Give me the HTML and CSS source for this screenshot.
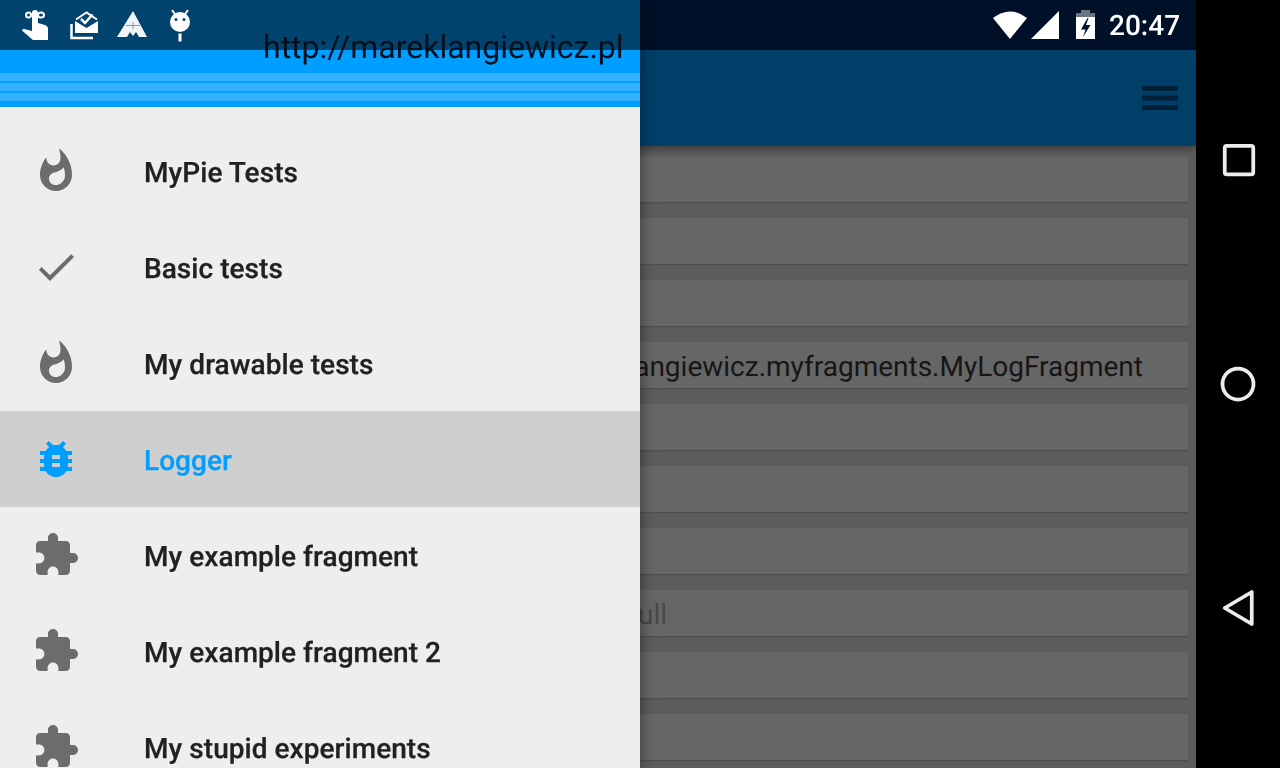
FILE: index.html
```html
<!DOCTYPE html>
<html lang="en">
<head>
<meta charset="utf-8">
<title>MyPie</title>
<link rel="stylesheet" href="styles.css">
</head>
<body>
<div class="screen">
  <div class="app">
    <div class="statusbar">
      <svg class="sys-icons" width="102" height="32" viewBox="0 0 102 32">
        <path class="white" d="M0 8 Q17 -5 34 8 L17 29 Z"/>
        <path class="white" d="M38 29 L66 1 V29 Z"/>
        <path class="batt-top" d="M88 0 h9 v3 h5 v4 H83 V3 h5z"/>
        <path class="white" d="M83 7 h19 v22 H83z"/>
        <path class="bolt" d="M94.500 8 L88 19.500 h4.500 L90 27 L97.500 15 h-4.500 L95.500 8z"/>
      </svg>
      <span class="clock">20:47</span>
    </div>
    <div class="appbar">
      <svg class="menu" width="36" height="24" viewBox="0 0 36 24">
        <rect y="0" width="36" height="5"/>
        <rect y="9.500" width="36" height="5"/>
        <rect y="19" width="36" height="5"/>
      </svg>
    </div>
    <div class="content">
      <div class="card"></div>
      <div class="card"></div>
      <div class="card"></div>
      <div class="card card-log">pl.mareklangiewicz.myfragments.MyLogFragment</div>
      <div class="card"></div>
      <div class="card"></div>
      <div class="card"></div>
      <div class="card card-null">null</div>
      <div class="card"></div>
      <div class="card"></div>
    </div>
  </div>

  <nav class="navbar">
    <div class="nav-btn">
      <svg width="48" height="48" viewBox="0 0 48 48"><rect x="10.750" y="9.750" width="28.500" height="28.500" rx="2"/></svg>
    </div>
    <div class="nav-btn">
      <svg width="48" height="48" viewBox="0 0 48 48"><circle cx="24" cy="24" r="15.500"/></svg>
    </div>
    <div class="nav-btn">
      <svg width="48" height="48" viewBox="0 0 48 48"><path d="M10.750 24 L37.750 8 V40 Z"/></svg>
    </div>
  </nav>

  <aside class="drawer">
    <div class="drawer-status">
      <svg width="32" height="32" viewBox="0 0 32 32">
        <path class="white" d="M12 3 a3 3 0 0 1 6 0 V13 l7 2 q3 1 3 4 V30 H13 L2.500 21 q-1-2 1.500-2 L12 21z"/>
        <ellipse class="ring thin" cx="8.500" cy="5" rx="2.500" ry="2.500"/>
        <ellipse class="ring thin" cx="21" cy="5" rx="3" ry="2.500"/>
      </svg>
      <svg width="32" height="32" viewBox="0 0 32 32">
        <path class="ring" d="M3.500 14 V28 H25"/>
        <path class="white" d="M7 11 L18.500 18 L30 11 V23 H7 Z"/>
        <path class="ring thin" d="M8 9.500 L18.500 2.500 L29 9.500"/>
        <path class="ring" d="M13 9 L17 13 L24.500 4.500"/>
      </svg>
      <svg width="32" height="32" viewBox="0 0 32 32">
        <path class="white soft" d="M17 1 L31 27 H23 L20 22 L17 26 L14 22 L11 27 H1 Z"/>
        <path class="cross" d="M17 12 V19 M10 15.500 H24"/>
      </svg>
      <svg width="32" height="32" viewBox="0 0 32 32">
        <path class="ring thin" d="M8 0 L11.500 5 M24 0 L20.500 5"/>
        <circle class="white" cx="16" cy="12" r="10"/>
        <circle class="eye" cx="12" cy="9.500" r="1.500"/>
        <circle class="eye" cx="20" cy="9.500" r="1.500"/>
        <rect class="white" x="14.500" y="23.500" width="3" height="8"/>
      </svg>
    </div>
    <header class="drawer-header">
      <span class="url">http://mareklangiewicz.pl</span>
      <div class="stripe"></div>
      <div class="stripe"></div>
      <div class="stripe"></div>
    </header>
    <ul class="menu-list">
      <li class="item">
        <svg class="item-icon" viewBox="0 0 24 24"><path d="M13.500.67s.74 2.650.74 4.800c0 2.060-1.350 3.730-3.410 3.730-2.070 0-3.630-1.670-3.630-3.730l.03-.36C5.210 7.510 4 10.620 4 14c0 4.420 3.580 8 8 8s8-3.580 8-8C20 8.610 17.410 3.800 13.500.67zM11.710 19c-1.780 0-3.220-1.400-3.220-3.140 0-1.620 1.050-2.760 2.810-3.120 1.770-.36 3.600-1.210 4.620-2.580.39 1.290.59 2.650.59 4.040 0 2.650-2.150 4.800-4.800 4.800z"/></svg>
        <span class="item-label">MyPie Tests</span>
      </li>
      <li class="item">
        <svg class="item-icon" viewBox="0 0 24 24"><path d="M9 16.170L4.830 12l-1.420 1.410L9 19 21 7l-1.410-1.410z"/></svg>
        <span class="item-label">Basic tests</span>
      </li>
      <li class="item">
        <svg class="item-icon" viewBox="0 0 24 24"><path d="M13.500.67s.74 2.650.74 4.800c0 2.060-1.350 3.730-3.410 3.730-2.070 0-3.630-1.670-3.630-3.730l.03-.36C5.210 7.510 4 10.620 4 14c0 4.420 3.580 8 8 8s8-3.580 8-8C20 8.610 17.410 3.800 13.500.67zM11.710 19c-1.780 0-3.220-1.400-3.220-3.140 0-1.620 1.050-2.760 2.810-3.120 1.770-.36 3.600-1.210 4.620-2.580.39 1.290.59 2.650.59 4.040 0 2.650-2.150 4.800-4.800 4.800z"/></svg>
        <span class="item-label">My drawable tests</span>
      </li>
      <li class="item item-active">
        <svg class="item-icon" viewBox="0 0 24 24"><path d="M20 8h-2.810c-.45-.78-1.070-1.450-1.820-1.960L17 4.410 15.590 3l-2.170 2.170C12.960 5.060 12.490 5 12 5c-.49 0-.96.06-1.410.17L8.410 3 7 4.410l1.620 1.630C7.880 6.550 7.260 7.220 6.810 8H4v2h2.090c-.05.33-.09.66-.09 1v1H4v2h2v1c0 .34.04.67.09 1H4v2h2.810c1.040 1.790 2.970 3 5.190 3s4.150-1.210 5.190-3H20v-2h-2.090c.05-.33.09-.66.09-1v-1h2v-2h-2v-1c0-.34-.04-.67-.09-1H20V8zm-6 8h-4v-2h4v2zm0-4h-4v-2h4v2z"/></svg>
        <span class="item-label">Logger</span>
      </li>
      <li class="item">
        <svg class="item-icon" viewBox="0 0 24 24"><path d="M20.500 11H19V7c0-1.100-.9-2-2-2h-4V3.500C13 2.120 11.880 1 10.500 1S8 2.120 8 3.500V5H4c-1.100 0-1.990.9-1.990 2v3.800H3.500c1.490 0 2.700 1.210 2.700 2.700s-1.210 2.700-2.700 2.700H2V20c0 1.100.9 2 2 2h3.800v-1.500c0-1.490 1.210-2.700 2.700-2.700 1.490 0 2.700 1.210 2.700 2.700V22H17c1.100 0 2-.9 2-2v-4h1.500c1.380 0 2.500-1.120 2.500-2.500S21.880 11 20.500 11z"/></svg>
        <span class="item-label">My example fragment</span>
      </li>
      <li class="item">
        <svg class="item-icon" viewBox="0 0 24 24"><path d="M20.500 11H19V7c0-1.100-.9-2-2-2h-4V3.500C13 2.120 11.880 1 10.500 1S8 2.120 8 3.500V5H4c-1.100 0-1.990.9-1.990 2v3.800H3.500c1.490 0 2.700 1.210 2.700 2.700s-1.210 2.700-2.700 2.700H2V20c0 1.100.9 2 2 2h3.800v-1.500c0-1.490 1.210-2.700 2.700-2.700 1.490 0 2.700 1.210 2.700 2.700V22H17c1.100 0 2-.9 2-2v-4h1.500c1.380 0 2.500-1.120 2.500-2.500S21.880 11 20.500 11z"/></svg>
        <span class="item-label">My example fragment 2</span>
      </li>
      <li class="item">
        <svg class="item-icon" viewBox="0 0 24 24"><path d="M20.500 11H19V7c0-1.100-.9-2-2-2h-4V3.500C13 2.120 11.880 1 10.500 1S8 2.120 8 3.500V5H4c-1.100 0-1.990.9-1.990 2v3.800H3.500c1.490 0 2.700 1.210 2.700 2.700s-1.210 2.700-2.700 2.700H2V20c0 1.100.9 2 2 2h3.800v-1.500c0-1.490 1.210-2.700 2.700-2.700 1.490 0 2.700 1.210 2.700 2.700V22H17c1.100 0 2-.9 2-2v-4h1.500c1.380 0 2.500-1.120 2.500-2.500S21.880 11 20.500 11z"/></svg>
        <span class="item-label">My stupid experiments</span>
      </li>
    </ul>
  </aside>
</div>
</body>
</html>
```

FILE: styles.css
```css
* { box-sizing: border-box; }
html, body { margin: 0; padding: 0; width: 1280px; height: 768px; overflow: hidden; background: #000; }
body { font-family: Roboto, "Noto Sans", sans-serif; text-rendering: geometricPrecision; }

.screen { position: relative; display: flex; width: 1280px; height: 768px; overflow: hidden; }

.app { display: flex; flex-direction: column; width: 1196px; height: 768px; background: #5c5c5c; }

.statusbar { display: flex; align-items: center; justify-content: flex-end; flex: none; height: 50px; padding-right: 16px; background: #001029; }
.sys-icons { margin-top: 2px; margin-right: 14px; }
.white { fill: #fff; }
.batt-top { fill: #6a7380; }
.bolt { fill: #001029; }
.clock { padding-top: 2px; font-size: 28px; font-weight: 500; color: #fff; line-height: 48px; will-change: transform; }

.appbar { position: relative; z-index: 1; display: flex; align-items: center; justify-content: flex-end; flex: none; height: 96px; padding-right: 18px; background: #003f68; box-shadow: 0 3px 8px rgba(0, 0, 0, .35); }
.menu { fill: #001f38; }

.content { display: flex; flex-direction: column; gap: 16px; flex: 1; padding: 10px 8px 0; overflow: hidden; }
.card { display: flex; align-items: center; justify-content: flex-end; flex: none; height: 46px; padding-top: 2px; background: #666; box-shadow: 0 1px 1px #4e4e4e; font-size: 28px; color: #161616; white-space: nowrap; }
.card-log { padding-right: 45px; }
.card-null { padding-right: 521px; color: #484848; }

.navbar { display: flex; flex-direction: column; justify-content: center; width: 84px; height: 768px; background: #000; }
.nav-btn { display: flex; align-items: center; justify-content: center; flex: none; height: 224px; }
.nav-btn svg { fill: none; stroke: #ececec; stroke-width: 3.750; stroke-linejoin: round; }

.drawer { position: absolute; z-index: 2; left: 0; top: 0; display: flex; flex-direction: column; width: 640px; height: 768px; overflow: hidden; background: #eee; box-shadow: 0 0 14px rgba(0, 0, 0, .45); clip-path: inset(0 -20px 0 0); }

.drawer-status { display: flex; gap: 16px; flex: none; height: 50px; padding: 10px 0 0 20px; background: #03446f; }
.ring { fill: none; stroke: #fff; stroke-width: 2.500; }
.thin { stroke-width: 2; }
.soft { opacity: .95; }
.cross { fill: none; stroke: #7d9ab0; stroke-width: 1; }
.eye { fill: #03446f; }

.drawer-header { position: relative; display: flex; flex-direction: column; gap: 2px; flex: none; height: 57px; padding-top: 23px; background: #009eff; }
.stripe { flex: none; height: 8px; background: #33b1ff; }
.url { position: absolute; right: 16px; top: -22px; font-size: 32px; line-height: 38px; color: #00101c; white-space: nowrap; will-change: transform; }

.menu-list { list-style: none; margin: 0; padding: 16px 0 0; }
.item { display: flex; align-items: center; gap: 64px; height: 96px; padding-left: 32px; font-size: 28px; font-weight: 500; color: #212121; white-space: nowrap; }
.item-label { padding-top: 2px; letter-spacing: .05px; -webkit-text-stroke: .25px currentColor; will-change: transform; }
.item-icon { flex: none; width: 48px; height: 48px; fill: #6c6c6c; }
.item-active { background: #cfcfcf; color: #009eff; }
.item-active .item-icon { fill: #009eff; }
```
